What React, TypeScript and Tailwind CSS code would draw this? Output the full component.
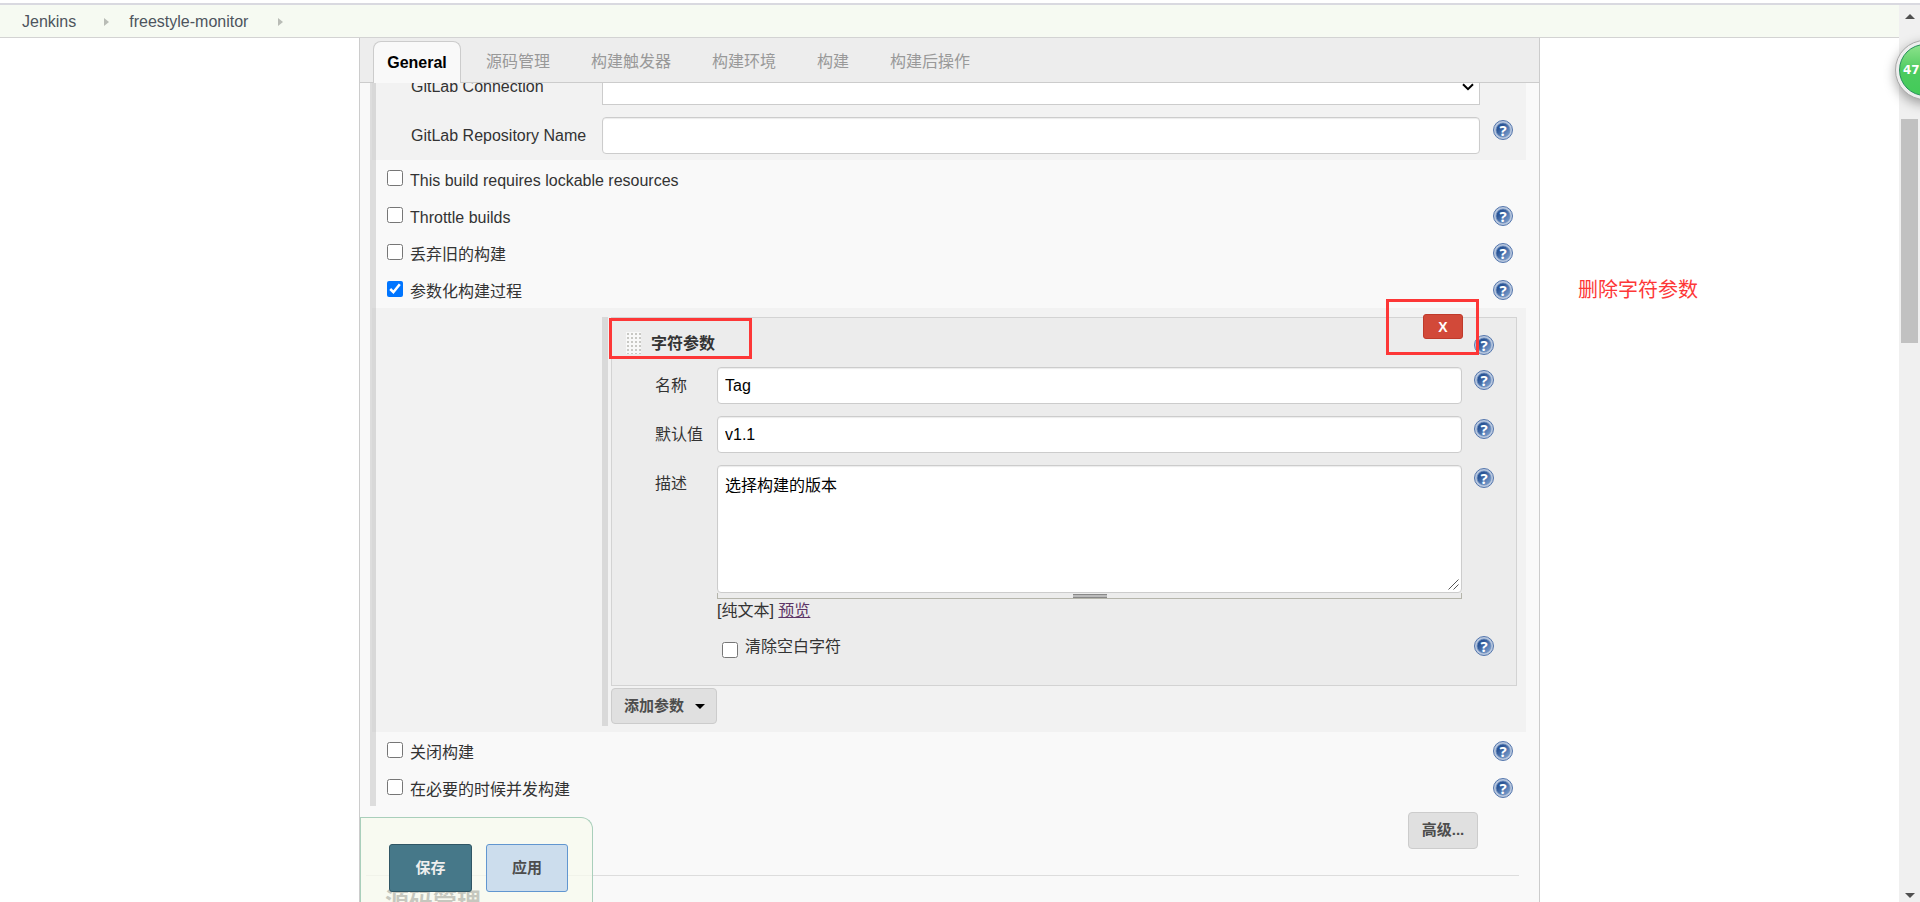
import React from 'react';

const tabs = ['源码管理', '构建触发器', '构建环境', '构建', '构建后操作'];

const inputClass =
  'block h-[37px] w-full rounded border border-[#ccc] bg-white px-[7px] text-base text-black shadow-[inset_0_1px_1px_rgba(0,0,0,0.08)] outline-none';

const HelpIcon: React.FC<{ label: string }> = ({ label }) => (
  <a href="#help" aria-label={`帮助: ${label}`} className="block size-5 shrink-0">
    <svg viewBox="0 0 20 20" className="block size-5">
      <defs>
        <linearGradient id="helpFill" x1="0" y1="0" x2="1" y2="1">
          <stop offset="0.3" stopColor="#2b5596" />
          <stop offset="1" stopColor="#86a9d6" />
        </linearGradient>
      </defs>
      <circle cx="10" cy="10" r="9.5" fill="#b9c8df" stroke="#5577ad" strokeWidth="1" />
      <circle cx="10" cy="10" r="7" fill="url(#helpFill)" stroke="#6f8fbe" strokeWidth="0.8" />
      <text x="10" y="15.5" textAnchor="middle" fontSize="15" fontWeight="bold" fontFamily="Noto Sans, sans-serif" fill="#fff">
        ?
      </text>
    </svg>
  </a>
);

const DragHandle: React.FC = () => (
  <svg viewBox="0 0 15 22" className="block h-[22px] w-[15px] cursor-move">
    <rect width="15" height="22" fill="#f8f8f8" />
    {[0, 1, 2, 3, 4, 5].map((row) =>
      [0, 1, 2, 3].map((col) => (
        <rect key={`${row}-${col}`} x={1 + col * 4} y={1 + row * 4} width="2" height="2" fill="#c8c8c4" />
      ))
    )}
  </svg>
);

const BreadcrumbArrow: React.FC = () => (
  <svg viewBox="0 0 5 8" className="h-2 w-[5px]">
    <path d="M0 0L5 4L0 8Z" fill="#b9bcb6" />
  </svg>
);

interface OptionRowProps {
  id: string;
  label: string;
  checked?: boolean;
  help?: boolean;
}

const OptionRow: React.FC<OptionRowProps> = ({ id, label, checked = false, help = true }) => (
  <div className="flex h-[37px] items-start pr-[13px] pl-[11px]">
    <input id={id} type="checkbox" defaultChecked={checked} className="mt-[10px] size-4 shrink-0" />
    <label htmlFor={id} className="ml-[7px] flex-1 pt-[9px] leading-6">
      {label}
    </label>
    {help && (
      <div className="pt-[9px]">
        <HelpIcon label={label} />
      </div>
    )}
  </div>
);

interface ParamRowProps {
  id: string;
  label: string;
  children: React.ReactNode;
}

const ParamRow: React.FC<ParamRowProps> = ({ id, label, children }) => (
  <div className="flex items-start pr-[22px] pl-[43px]">
    <label htmlFor={id} className="w-[62px] shrink-0 pt-[7px] leading-6">
      {label}
    </label>
    <div className="min-w-0 flex-1">{children}</div>
    <div className="ml-3 pt-[3px]">
      <HelpIcon label={label} />
    </div>
  </div>
);

const StringParameter: React.FC = () => (
  <div className="relative border border-[#d3d3d3] bg-[#ececec]">
    <button
      type="button"
      className="absolute -top-1 right-[53px] h-[25px] w-10 rounded-[3px] border border-[#bf3a2b] bg-[#d24939] text-sm leading-5 font-bold text-white"
    >
      X
    </button>

    <div className="flex h-[49px] items-start pr-[22px] pl-[14px]">
      <div className="pt-[14px]">
        <DragHandle />
      </div>
      <b className="ml-[10px] flex-1 pt-[14px] leading-6">字符参数</b>
      <div className="pt-[17px]">
        <HelpIcon label="字符参数" />
      </div>
    </div>

    {/* Highlight frames over the title and the delete button */}
    <div className="absolute -top-[19px] right-[37px] h-14 w-[93px] border-3 border-[#fd3737] pointer-events-none" />
    <div className="absolute top-0 -left-[3px] h-[41px] w-[143px] border-3 border-[#fd3737] pointer-events-none" />

    <div className="flex flex-col gap-3">
      <ParamRow id="name" label="名称">
        <input id="name" type="text" defaultValue="Tag" className={inputClass} />
      </ParamRow>
      <ParamRow id="defaultValue" label="默认值">
        <input id="defaultValue" type="text" defaultValue="v1.1" className={inputClass} />
      </ParamRow>
      <ParamRow id="description" label="描述">
        <div className="relative">
          <textarea
            id="description"
            defaultValue="选择构建的版本"
            className="block h-32 w-full resize-none rounded border border-[#ccc] bg-white px-[7px] py-2 text-base leading-6 text-black shadow-[inset_0_1px_1px_rgba(0,0,0,0.08)] outline-none"
          />
          <svg viewBox="0 0 11 11" className="pointer-events-none absolute right-[3px] bottom-[3px] size-[11px]">
            <path d="M0.5 10.5L10.5 0.5M5.5 10.5L10.5 5.5" stroke="#555" fill="none" />
          </svg>
        </div>
        <div className="flex h-[6px] justify-center border-x border-b border-[#b5b5ab] pt-px">
          <div className="h-1 w-[34px] border-y border-[#888] bg-[#bbb]" />
        </div>
        <div className="leading-6">
          [纯文本]{' '}
          <a href="#preview" className="text-[#5c3566] underline">
            预览
          </a>
        </div>
      </ParamRow>
    </div>

    <div className="mt-[13px] flex items-start pr-[22px] pb-[27px] pl-[110px]">
      <input id="trim" type="checkbox" className="mt-[6px] size-4 shrink-0" />
      <label htmlFor="trim" className="ml-[7px] flex-1 leading-[22px]">
        清除空白字符
      </label>
      <HelpIcon label="清除空白字符" />
    </div>
  </div>
);

const Breadcrumbs: React.FC = () => (
  <nav className="flex h-[33px] shrink-0 items-center border-b border-[#d3d3d3] bg-[#f6faf2] px-[22px] pt-px text-[#4d545d]">
    <a href="#jenkins" className="leading-6">Jenkins</a>
    <span className="mr-5 ml-7 flex">
      <BreadcrumbArrow />
    </span>
    <a href="#job" className="leading-6">freestyle-monitor</a>
    <span className="ml-[30px] flex">
      <BreadcrumbArrow />
    </span>
  </nav>
);

const TabBar: React.FC = () => (
  <div className="relative z-10 flex h-[45px] shrink-0 items-end border-b border-[#ccc] bg-[#ededed] pl-[13px]">
    <button
      type="button"
      className="-mb-px h-[42px] w-[88px] rounded-t-lg border border-b-0 border-[#ccc] bg-[#f9f9f9] font-bold text-black"
    >
      General
    </button>
    <div className="ml-[5px] flex gap-px">
      {tabs.map((tab) => (
        <button key={tab} type="button" className="h-10 px-5 text-[#999]">
          {tab}
        </button>
      ))}
    </div>
  </div>
);

const ConfigForm: React.FC = () => (
  <form className="min-h-0 flex-1 overflow-hidden pl-[10px]" onSubmit={(e) => e.preventDefault()}>
    {/* General options */}
    <div className="mr-[13px] border-l-6 border-[#ddd]">
      <div className="-mt-[15px] -ml-1 border-l-4 border-[#d8d8d8] bg-[#f2f2f2] pb-[6px]">
        <div className="flex items-center pr-[46px] pl-[35px]">
          <label htmlFor="connection" className="w-[191px] leading-6">
            GitLab Connection
          </label>
          <div className="relative min-w-0 flex-1">
            <select
              id="connection"
              className="block h-[37px] w-full appearance-none border border-[#ccc] bg-white text-base"
            />
            <svg viewBox="0 0 12 8" className="pointer-events-none absolute top-[15px] right-[6px] h-2 w-3">
              <path d="M1 1.2L6 6.2L11 1.2" stroke="#000" strokeWidth="2" fill="none" />
            </svg>
          </div>
        </div>
        <div className="mt-3 flex items-start pr-[13px] pl-[35px]">
          <label htmlFor="repository" className="w-[191px] pt-[7px] leading-6">
            GitLab Repository Name
          </label>
          <div className="min-w-0 flex-1">
            <input id="repository" type="text" className={inputClass} />
          </div>
          <div className="ml-[13px] pt-[3px]">
            <HelpIcon label="GitLab Repository Name" />
          </div>
        </div>
      </div>

      <OptionRow id="lockable" label="This build requires lockable resources" help={false} />
      <OptionRow id="throttle" label="Throttle builds" />
      <OptionRow id="discard" label="丢弃旧的构建" />
      <OptionRow id="parameterized" label="参数化构建过程" checked />

      <div className="-ml-1 border-l-4 border-[#d8d8d8] bg-[#f2f2f2] pt-[9px] pr-[9px] pb-[6px] pl-[226px]">
        <div className="border-l-6 border-[#d9d9d9] pb-[2px] pl-[3px]">
          <StringParameter />
          <button
            type="button"
            className="mt-[2px] flex h-9 w-[106px] items-center justify-between rounded border border-[#ccc] bg-[#e0e0e0] pr-[11px] pl-3 text-[15px] font-bold text-[#4d4d4d]"
          >
            添加参数
            <svg viewBox="0 0 10 5" className="h-[5px] w-[10px]">
              <path d="M0 0H10L5 5Z" fill="#000" />
            </svg>
          </button>
        </div>
      </div>

      <OptionRow id="disable" label="关闭构建" />
      <OptionRow id="concurrent" label="在必要的时候并发构建" />
    </div>

    <div className="mt-[6px] flex justify-end pr-[61px]">
      <button
        type="button"
        className="h-[37px] w-[70px] rounded border border-[#ccc] bg-[#e0e0e0] text-[15px] font-bold text-[#4d4d4d]"
      >
        高级...
      </button>
    </div>

    {/* Source code management */}
    <section className="mt-[26px] mr-5 -ml-1 border-t border-[#ddd] pt-[10px]">
      <h2 className="pl-[19px] text-2xl leading-8 font-bold text-[#333]">源码管理</h2>
    </section>
  </form>
);

const BottomBar: React.FC = () => (
  <div className="absolute bottom-0 left-0 z-10 flex h-[85px] w-[233px] gap-[14px] rounded-tr-xl border border-b-0 border-[#a9cfbb] bg-[#f7f9ee]/75 pt-[26px] pl-7 text-[15px] font-bold">
    <button type="submit" className="h-12 w-[83px] rounded-[3px] border border-[#305665] bg-[#467889] text-[#eee]">
      保存
    </button>
    <button type="button" className="h-12 w-[82px] rounded-[3px] border border-[#6196d0] bg-[#ccdded] text-[#4d4d4d]">
      应用
    </button>
  </div>
);

const ScrollBar: React.FC = () => (
  <div className="flex w-[21px] shrink-0 flex-col items-center bg-[#f0f0f0] pt-[9px] pb-1">
    <svg viewBox="0 0 10 5" className="h-[5px] w-[10px] shrink-0">
      <path d="M0 5H10L5 0Z" fill="#505050" />
    </svg>
    <div className="mt-[100px] h-[224px] w-[17px] bg-[#c1c1c1]" />
    <svg viewBox="0 0 10 5" className="mt-auto h-[5px] w-[10px] shrink-0">
      <path d="M0 0H10L5 5Z" fill="#505050" />
    </svg>
  </div>
);

// Floating accelerator ball, half hidden behind the right edge
const FloatingBall: React.FC = () => (
  <div className="absolute top-10 -right-[35px] z-20 flex size-[60px] items-center rounded-full border border-[#aaa] bg-[#eee] p-[3px] shadow-[0_4px_12px_rgba(0,0,0,0.35)]">
    <div className="flex size-full items-center rounded-full border border-[#27905c] bg-linear-to-b from-[#8ce38c] via-[#4dcb60] to-[#42cb58] pl-[3px]">
      <span className="font-['DejaVu_Sans'] text-xs font-bold text-white">47</span>
    </div>
  </div>
);

const App: React.FC = () => {
  return (
    <div className="relative flex h-screen flex-col overflow-hidden bg-white font-['Liberation_Sans','Noto_Sans_CJK_SC',sans-serif] text-base text-[#333]">
      <div className="h-[5px] shrink-0 border-b-2 border-[#d9d9e0]" />
      <div className="flex min-h-0 flex-1">
        <div className="relative flex min-w-0 flex-1 flex-col">
          <Breadcrumbs />
          <main className="relative mx-auto flex min-h-0 w-full max-w-[1181px] flex-1 flex-col border-x border-[#ccc] bg-[#f9f9f9]">
            <TabBar />
            <ConfigForm />
            <BottomBar />
          </main>
          <p className="absolute top-[270px] right-[201px] text-xl leading-[30px] text-[#fd3737]">删除字符参数</p>
        </div>
        <ScrollBar />
      </div>
      <FloatingBall />
    </div>
  );
};

export default App;
